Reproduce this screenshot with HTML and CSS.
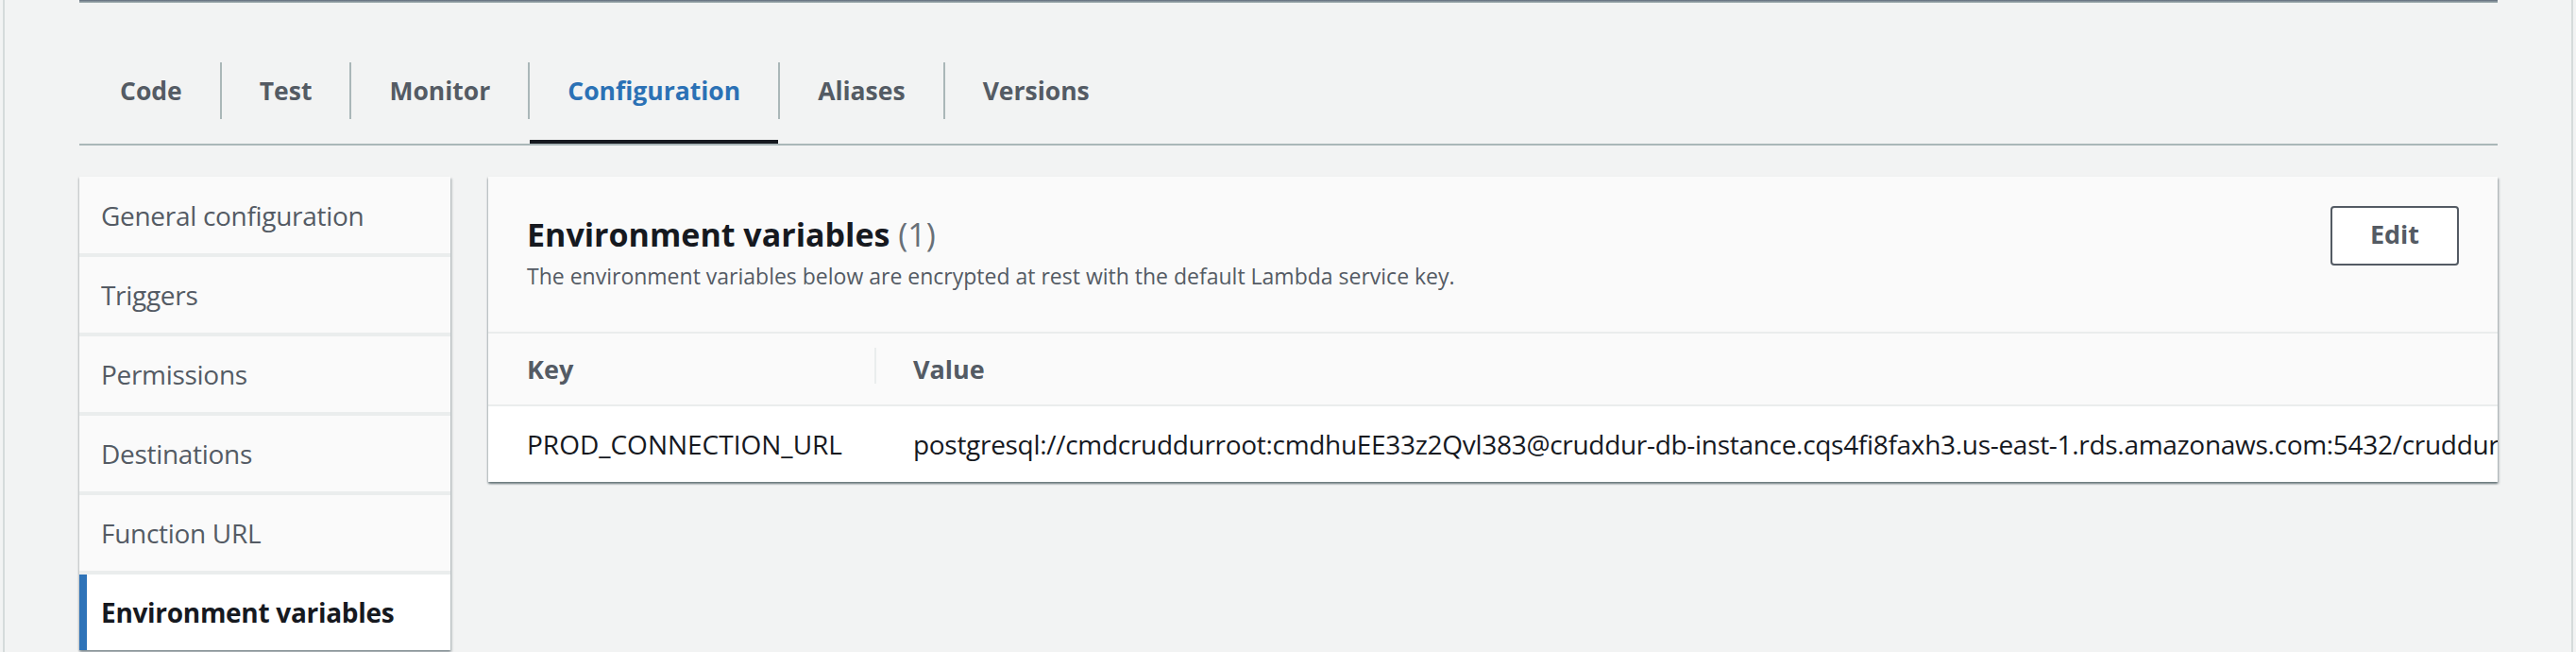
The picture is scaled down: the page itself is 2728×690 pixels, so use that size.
FILE: index.html
```html
<!DOCTYPE html>
<html lang="en">
<head>
<meta charset="utf-8">
<title>Lambda configuration</title>
<link rel="stylesheet" href="styles.css">
</head>
<body>
<div class="page">
  <div class="content">
    <div class="topcard"></div>
    <nav class="tabs">
      <div class="tab">Code</div>
      <div class="tab">Test</div>
      <div class="tab">Monitor</div>
      <div class="tab active">Configuration</div>
      <div class="tab">Aliases</div>
      <div class="tab">Versions</div>
    </nav>
    <div class="layout">
      <ul class="sidenav">
        <li class="navitem">General configuration</li>
        <li class="navitem">Triggers</li>
        <li class="navitem">Permissions</li>
        <li class="navitem">Destinations</li>
        <li class="navitem">Function URL</li>
        <li class="navitem active">Environment variables</li>
      </ul>
      <section class="card">
        <header class="card-header">
          <div class="titles">
            <h2 class="title">Environment variables <span class="count">(1)</span></h2>
            <p class="desc">The environment variables below are encrypted at rest with the default Lambda service key.</p>
          </div>
          <button class="btn">Edit</button>
        </header>
        <div class="table">
          <div class="row head">
            <div class="cell key">Key</div>
            <div class="cell val"><span class="divider"></span>Value</div>
          </div>
          <div class="row body">
            <div class="cell key">PROD_CONNECTION_URL</div>
            <div class="cell val">postgresql://cmdcruddurroot:cmdhuEE33z2Qvl383@cruddur-db-instance.cqs4fi8faxh3.us-east-1.rds.amazonaws.com:5432/cruddur</div>
          </div>
        </div>
      </section>
    </div>
  </div>
</div>
</body>
</html>
```
FILE: styles.css
```css
* { box-sizing: border-box; }
html, body {
  margin: 0;
  padding: 0;
  background: #f2f3f3;
  font-family: "Open Sans", "Noto Sans", Arial, sans-serif;
  color: #16191f;
}
body { height: 690px; overflow: hidden; }
.page {
  margin: 0 3px 0 3px;
  height: 690px;
  border-left: 2px solid #d5dbdb;
  border-right: 2px solid #d5dbdb;
}
.content {
  margin-left: 79px;
  width: 2561px;
}
.topcard {
  height: 3px;
  background: linear-gradient(#5f6b7a, #aab7b8);
}
.tabs {
  display: flex;
  margin-top: 45px;
  border-bottom: 2px solid #aab7b8;
}
.tab {
  position: relative;
  height: 104px;
  padding: 0 40px 8px 41px;
  display: flex;
  align-items: center;
  font-size: 26.5px;
  font-weight: 700;
  color: #545b64;
}
.tab:first-child { padding-left: 43px; }
.tab + .tab { padding-left: 42px; }
.tab + .tab::before {
  content: "";
  position: absolute;
  left: 0;
  top: 18px;
  width: 2px;
  height: 60px;
  background: #aab7b8;
}
.tab.active { color: #2b71b5; }
.tab.active::after {
  content: "";
  position: absolute;
  left: 2px;
  right: 0;
  bottom: 0;
  height: 4px;
  background: #16191f;
}
.layout {
  display: flex;
  gap: 40px;
  margin-top: 33px;
  align-items: flex-start;
}
.sidenav {
  list-style: none;
  margin: 0;
  padding: 0;
  width: 393px;
  flex: none;
  display: flex;
  flex-direction: column;
  gap: 4px;
  background: #eaeded;
  box-shadow: 0 2px 2px rgba(0, 28, 36, .3), 2px 2px 2px rgba(0, 28, 36, .15), -1px 1px 2px rgba(0, 28, 36, .12);
}
.navitem {
  height: 80px;
  display: flex;
  align-items: center;
  padding-left: 23px;
  background: #fafafa;
  font-size: 28px;
  letter-spacing: -0.3px;
  color: #545b64;
}
.navitem:first-child { height: 81px; }
.navitem.active {
  background: #fff;
  border-left: 8px solid #2e73b8;
  padding-left: 15px;
  font-weight: 700;
  color: #16191f;
}
.card {
  flex: 1;
  min-width: 0;
  overflow: hidden;
  background: #fff;
  box-shadow: 0 2px 2px rgba(0, 28, 36, .45), 2px 2px 2px rgba(0, 28, 36, .15), -1px 1px 2px rgba(0, 28, 36, .12);
}
.card-header {
  display: flex;
  justify-content: space-between;
  align-items: flex-start;
  height: 166px;
  padding: 31px 41px 0 41px;
  background: #fafafa;
  border-bottom: 2px solid #eaeded;
}
.title {
  margin: 8px 0 0 0;
  font-size: 34px;
  line-height: 44px;
  font-weight: 700;
  color: #16191f;
}
.count { font-weight: 400; color: #687078; }
.desc {
  margin: 6px 0 0 0;
  font-size: 23px;
  line-height: 32px;
  color: #545b64;
}
.btn {
  width: 136px;
  height: 63px;
  border: 2px solid #545b64;
  border-radius: 4px;
  background: #fff;
  font-family: inherit;
  font-size: 27px;
  font-weight: 700;
  color: #545b64;
  padding: 0 0 4px 0;
}
.row {
  display: flex;
  align-items: center;
  white-space: nowrap;
}
.row.head {
  height: 77px;
  background: #fafafa;
  border-bottom: 2px solid #eaeded;
  font-weight: 700;
  color: #545b64;
}
.row.body {
  height: 80px;
  background: #fff;
  color: #16191f;
}
.cell { font-size: 28px; }
.row.head .cell { font-size: 27px; }
.row.body .cell.val { letter-spacing: -0.3px; }
.cell.key {
  width: 409px;
  flex: none;
  padding-left: 41px;
}
.cell.val {
  position: relative;
  padding-left: 41px;
}
.divider {
  position: absolute;
  left: 0;
  top: -4px;
  width: 2px;
  height: 38px;
  background: #eaeded;
}
```
